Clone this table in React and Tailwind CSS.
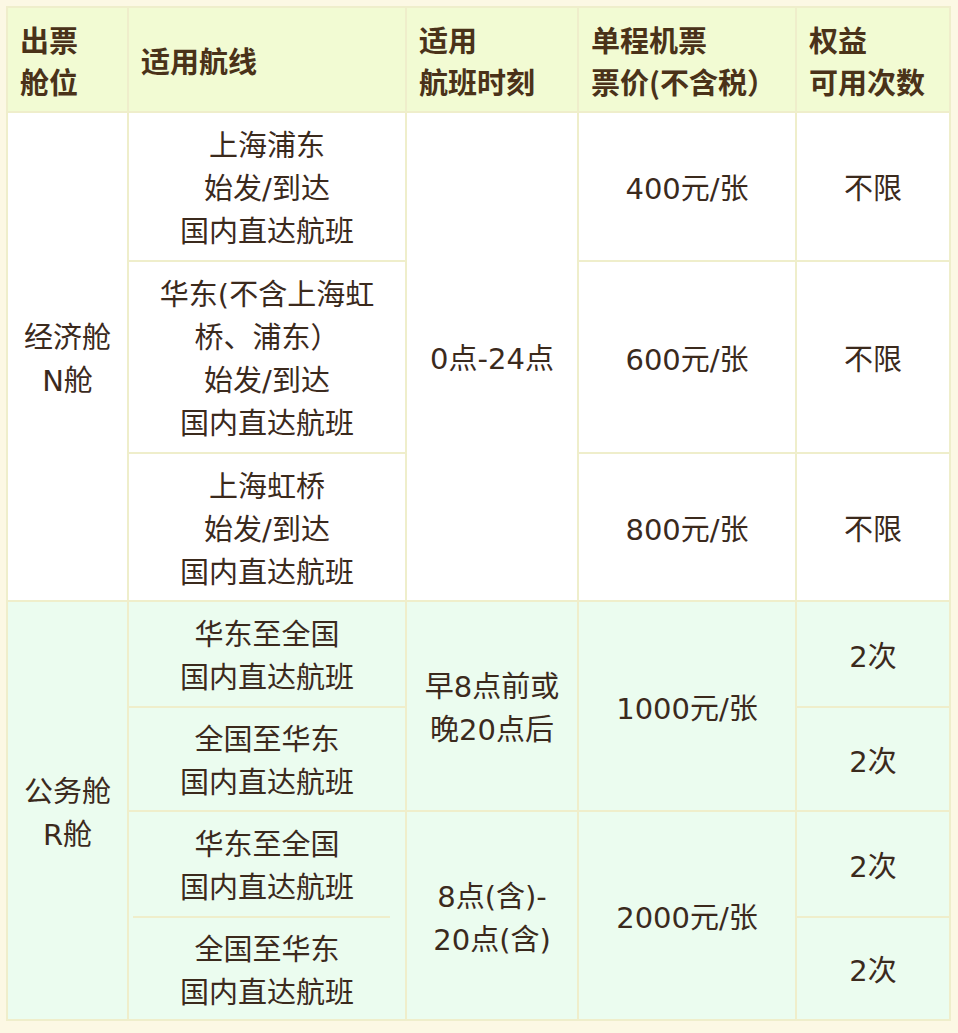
import React from "react";

const font = { fontFamily: '"Noto Sans CJK SC", "Noto Sans", sans-serif' };
const bodyFont = { fontFamily: '"DejaVu Sans", "Noto Sans CJK SC", sans-serif' };

function Cell({ className = "", children }) {
  return (
    <div
      className={"flex flex-col items-center justify-center pt-[6px] text-center text-[29px] leading-[43px] text-[#3b2a1d] " + className}
      style={bodyFont}
    >
      {children}
    </div>
  );
}

function Head({ className = "", children }) {
  return (
    <div className={"flex flex-col justify-center bg-[#f2fbd3] pl-[12px] text-[29px] leading-[42px] font-bold text-[#4a3219] " + className}>
      {children}
    </div>
  );
}

export default function App() {
  return (
    <div className="w-[958px] h-[1033px] bg-[#fcf8e4] pt-[6px] pl-[6px]" style={font}>
      <div className="grid w-fit grid-cols-[119px_276px_170px_216px_152px] grid-rows-[103px_147px_190px_146px_104px_102px_104px_101px] gap-[2px] bg-[#efeecb] p-[2px]">
        {/* header */}
        <Head className="col-start-1 row-start-1"><span>出票</span><span>舱位</span></Head>
        <Head className="col-start-2 row-start-1"><span>适用航线</span></Head>
        <Head className="col-start-3 row-start-1"><span>适用</span><span>航班时刻</span></Head>
        <Head className="col-start-4 row-start-1"><span>单程机票</span><span>票价(不含税）</span></Head>
        <Head className="col-start-5 row-start-1"><span>权益</span><span>可用次数</span></Head>

        {/* economy */}
        <Cell className="col-start-1 row-start-2 row-span-3 bg-white"><span>经济舱</span><span>N舱</span></Cell>
        <Cell className="col-start-2 row-start-2 bg-white"><span>上海浦东</span><span>始发/到达</span><span>国内直达航班</span></Cell>
        <Cell className="col-start-2 row-start-3 bg-white"><span>华东(不含上海虹</span><span>桥、浦东）</span><span>始发/到达</span><span>国内直达航班</span></Cell>
        <Cell className="col-start-2 row-start-4 bg-white"><span>上海虹桥</span><span>始发/到达</span><span>国内直达航班</span></Cell>
        <Cell className="col-start-3 row-start-2 row-span-3 bg-white"><span>0点-24点</span></Cell>
        <Cell className="col-start-4 row-start-2 bg-white"><span>400元/张</span></Cell>
        <Cell className="col-start-4 row-start-3 bg-white"><span>600元/张</span></Cell>
        <Cell className="col-start-4 row-start-4 bg-white"><span>800元/张</span></Cell>
        <Cell className="col-start-5 row-start-2 bg-white"><span>不限</span></Cell>
        <Cell className="col-start-5 row-start-3 bg-white"><span>不限</span></Cell>
        <Cell className="col-start-5 row-start-4 bg-white"><span>不限</span></Cell>

        {/* business */}
        <Cell className="col-start-1 row-start-5 row-span-4 bg-[#ebfcef]"><span>公务舱</span><span>R舱</span></Cell>
        <Cell className="col-start-2 row-start-5 bg-[#ebfcef]"><span>华东至全国</span><span>国内直达航班</span></Cell>
        <Cell className="col-start-2 row-start-6 bg-[#ebfcef]"><span>全国至华东</span><span>国内直达航班</span></Cell>
        <div className="col-start-2 row-start-7 row-span-2 flex flex-col bg-[#ebfcef]">
          <Cell className="h-[104px]"><span>华东至全国</span><span>国内直达航班</span></Cell>
          <div className="ml-[4px] mr-[15px] h-[2px] bg-[#efeecb]" />
          <Cell className="flex-1"><span>全国至华东</span><span>国内直达航班</span></Cell>
        </div>
        <Cell className="col-start-3 row-start-5 row-span-2 bg-[#ebfcef]"><span>早8点前或</span><span>晚20点后</span></Cell>
        <Cell className="col-start-3 row-start-7 row-span-2 bg-[#ebfcef]"><span>8点(含)-</span><span>20点(含)</span></Cell>
        <Cell className="col-start-4 row-start-5 row-span-2 bg-[#ebfcef]"><span>1000元/张</span></Cell>
        <Cell className="col-start-4 row-start-7 row-span-2 bg-[#ebfcef]"><span>2000元/张</span></Cell>
        <Cell className="col-start-5 row-start-5 bg-[#ebfcef]"><span>2次</span></Cell>
        <Cell className="col-start-5 row-start-6 bg-[#ebfcef]"><span>2次</span></Cell>
        <Cell className="col-start-5 row-start-7 bg-[#ebfcef]"><span>2次</span></Cell>
        <Cell className="col-start-5 row-start-8 bg-[#ebfcef]"><span>2次</span></Cell>
      </div>
    </div>
  );
}
